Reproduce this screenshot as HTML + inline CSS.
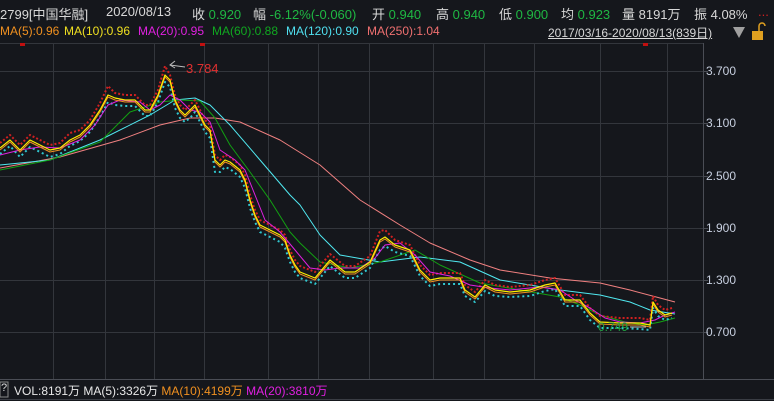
<!DOCTYPE html>
<html><head><meta charset="utf-8"><style>
body{margin:0;width:774px;height:401px;background:#15171c;overflow:hidden;position:relative;font-family:"Liberation Sans","Noto Sans CJK SC",sans-serif}
.t{position:absolute;white-space:nowrap}
.r1{top:4px;font-size:13px;color:#d8d8d8}
.r2{top:24px;font-size:12px}
.g{color:#1fb843}
.ax{position:absolute;left:706px;font-size:12px;color:#c8d0e0}
</style></head><body>
<svg width="774" height="401" style="position:absolute;left:0;top:0">
<g stroke="#33363c" stroke-width="1">
<line x1="0" y1="43.5" x2="703" y2="43.5"/>
<line x1="0" y1="71.5" x2="703" y2="71.5"/><line x1="0" y1="123.5" x2="703" y2="123.5"/><line x1="0" y1="176.5" x2="703" y2="176.5"/><line x1="0" y1="228.5" x2="703" y2="228.5"/><line x1="0" y1="280.5" x2="703" y2="280.5"/><line x1="0" y1="332.5" x2="703" y2="332.5"/>
<line x1="53.5" y1="43" x2="53.5" y2="379"/><line x1="105.5" y1="43" x2="105.5" y2="379"/><line x1="154.5" y1="43" x2="154.5" y2="379"/><line x1="204.5" y1="43" x2="204.5" y2="379"/><line x1="268.5" y1="43" x2="268.5" y2="379"/><line x1="318.5" y1="43" x2="318.5" y2="379"/><line x1="369.5" y1="43" x2="369.5" y2="379"/><line x1="433.5" y1="43" x2="433.5" y2="379"/><line x1="484.5" y1="43" x2="484.5" y2="379"/><line x1="534.5" y1="43" x2="534.5" y2="379"/><line x1="600.5" y1="43" x2="600.5" y2="379"/><line x1="667.5" y1="43" x2="667.5" y2="379"/>
</g>
<line x1="703.5" y1="43" x2="703.5" y2="379" stroke="#4a4d55"/>
<line x1="0" y1="379.5" x2="774" y2="379.5" stroke="#4a4d55"/>
<line x1="0" y1="399.5" x2="774" y2="399.5" stroke="#3a3d44"/>
<g stroke="#4a4d55"><line x1="703" y1="71.5" x2="708" y2="71.5"/><line x1="703" y1="123.5" x2="708" y2="123.5"/><line x1="703" y1="176.5" x2="708" y2="176.5"/><line x1="703" y1="228.5" x2="708" y2="228.5"/><line x1="703" y1="280.5" x2="708" y2="280.5"/><line x1="703" y1="332.5" x2="708" y2="332.5"/></g>
<g fill="none" stroke-linejoin="round">
<polyline stroke="#f08080" points="0,168 60,157 120,140 160,125 190,118 215,118 240,122 280,140 320,165 360,200 400,225 430,243 470,260 500,270 550,278 600,283 630,290 660,298 675,302"/>
<polyline stroke="#50e8f0" points="0,165 50,160 100,140 150,115 175,100 195,98 210,105 230,125 260,160 290,195 300,205 320,235 340,255 380,262 420,257 460,262 500,280 560,290 600,295 630,302 650,310 675,314"/>
<polyline stroke="#12a012" points="0,170 50,160 100,142 130,112 160,102 180,100 200,101 215,118 230,145 250,172 270,200 290,232 300,243 320,262 350,268 380,262 415,250 440,265 480,283 520,290 560,297 580,305 600,315 625,322 645,325 660,322 675,318"/>
<polyline stroke="#d02020" stroke-width="2" stroke-dasharray="2 2" points="0,143 10,135 20,145 30,135 40,140 50,145 60,143 70,133 80,130 90,120 100,103 108,86 115,93 125,95 135,95 145,105 150,105 158,90 165,66 170,75 175,95 180,105 185,110 190,105 195,100 200,110 205,120 210,125 215,155 220,160 225,155 230,157 240,165 245,175 250,195 255,210 260,220 270,225 280,230 285,235 290,250 295,260 300,266 315,272 330,254 345,266 355,266 370,256 380,231 385,230 395,240 410,245 420,265 430,275 440,273 460,273 465,285 475,292 485,280 495,285 510,287 530,285 545,280 555,278 565,295 580,295 590,308 600,316 620,318 640,318 650,320 653,296 658,305 665,310 672,308"/>
<polyline stroke="#30c8d0" stroke-width="2" stroke-dasharray="2 3" points="0,154 10,146 20,157 30,147 40,152 50,157 60,154 70,146 80,141 90,132 100,117 108,102 115,105 125,106 135,106 145,116 150,116 158,102 165,82 170,87 175,108 180,118 185,122 190,118 195,112 200,122 205,132 210,138 215,172 220,172 225,167 230,169 240,177 245,188 250,208 255,222 260,232 270,237 280,242 285,248 290,262 295,272 300,278 315,284 330,266 345,278 355,278 370,268 380,250 385,246 395,252 410,256 420,276 430,286 440,284 460,284 465,296 475,302 485,291 495,296 510,297 530,296 545,291 555,289 565,306 580,306 590,320 600,328 620,328 640,329 650,330 653,308 658,316 665,320 672,318"/>
<polyline stroke="#e020e0" points="0,155 20,150 40,147 60,148 80,140 95,125 108,105 120,100 140,102 150,110 160,105 170,95 180,100 190,110 200,112 210,122 220,150 235,160 245,170 255,195 265,220 280,232 295,250 310,268 325,270 340,268 360,268 375,258 385,245 400,243 415,255 430,272 450,276 470,285 490,288 510,290 540,287 560,290 575,300 590,308 605,318 620,322 640,323 655,320 665,315 675,312"/>
<polyline stroke="#f09020" stroke-width="1" points="0,150 10,142 20,152 30,142 40,147 50,152 60,150 70,142 80,137 90,127 100,112 108,97 115,100 125,102 135,102 145,112 150,112 158,97 165,77 170,82 175,102 180,112 185,117 190,112 195,107 200,117 205,127 210,132 215,162 220,167 225,162 230,164 240,172 245,182 250,202 255,217 260,227 270,232 280,237 285,242 290,257 295,267 300,274 315,280 330,262 345,274 355,274 370,264 380,242 385,239 395,247 410,252 420,272 430,282 440,280 460,280 465,292 475,299 485,287 495,292 510,294 530,292 545,287 555,285 565,302 580,302 590,315 600,324 620,325 640,325 650,327 653,304 658,312 665,317 672,315"/>
<polyline stroke="#ffee00" stroke-width="1.2" points="0,148 10,140 20,150 30,140 40,145 50,150 60,148 70,140 80,135 90,125 100,110 108,95 115,98 125,100 135,100 145,110 150,110 158,95 165,75 170,80 175,100 180,110 185,115 190,110 195,105 200,115 205,125 210,130 215,160 220,165 225,160 230,162 240,170 245,180 250,200 255,215 260,225 270,230 280,235 285,240 290,255 295,265 300,272 315,278 330,260 345,272 355,272 370,262 380,240 385,237 395,245 410,250 420,270 430,280 440,278 460,278 465,290 475,297 485,285 495,290 510,292 530,290 545,285 555,283 565,300 580,300 590,313 600,322 620,323 640,323 650,325 653,302 658,310 665,315 672,313"/>
</g>
<line x1="170" y1="65" x2="185" y2="67" stroke="#bbb"/>
<polyline points="175,61 170,65 175,68" fill="none" stroke="#bbb"/>
<line x1="630" y1="327" x2="646" y2="327" stroke="#bbb"/>
<rect x="0" y="382" width="8" height="15" fill="none" stroke="#888"/>
<path d="M733 27 L745 27 L739 38 Z" fill="#a0a0a0"/>
<rect x="752" y="31" width="11" height="9" fill="#e0a020"/>
<path d="M759 31 V26 a3 3 0 0 1 6 0" fill="none" stroke="#e0a020" stroke-width="1.5"/>
<rect x="20" y="43" width="5" height="3" fill="#c01010"/><rect x="200" y="43" width="5" height="3" fill="#c01010"/><rect x="643" y="43" width="5" height="3" fill="#c01010"/>
</svg>
<span class="t r1">2799[中国华融]</span>
<span class="t r1" style="left:106px">2020/08/13</span>
<span class="t r1" style="left:192px">收 <span class="g">0.920</span></span>
<span class="t r1" style="left:253px">幅 <span class="g">-6.12%(-0.060)</span></span>
<span class="t r1" style="left:372px">开 <span class="g">0.940</span></span>
<span class="t r1" style="left:436px">高 <span class="g">0.940</span></span>
<span class="t r1" style="left:499px">低 <span class="g">0.900</span></span>
<span class="t r1" style="left:561px">均 <span class="g">0.923</span></span>
<span class="t r1" style="left:622px">量 8191万</span>
<span class="t r1" style="left:694px">振 4.08%</span>
<span class="t r1" style="left:758px;color:#d02020">...</span>
<span class="t r2" style="left:0;color:#f09020">MA(5):0.96</span>
<span class="t r2" style="left:64px;color:#f0e020">MA(10):0.96</span>
<span class="t r2" style="left:138px;color:#e020e0">MA(20):0.95</span>
<span class="t r2" style="left:212px;color:#10a820">MA(60):0.88</span>
<span class="t r2" style="left:286px;color:#50e0f0">MA(120):0.90</span>
<span class="t r2" style="left:367px;color:#f07070">MA(250):1.04</span>
<span class="t r2" style="left:548px;color:#d8d8d8;text-decoration:underline">2017/03/16-2020/08/13(839日)</span>
<span class="t" style="left:186px;top:61px;font-size:13px;color:#e03030">3.784</span>
<span class="t" style="left:598px;top:320px;font-size:12px;color:#20a040">0.749</span>
<span class="ax" style="top:64px">3.700</span>
<span class="ax" style="top:116px">3.100</span>
<span class="ax" style="top:169px">2.500</span>
<span class="ax" style="top:221px">1.900</span>
<span class="ax" style="top:273px">1.300</span>
<span class="ax" style="top:325px">0.700</span>
<span class="t" style="left:1px;top:382px;font-size:11px;color:#ddd">?</span>
<span class="t" style="left:14px;top:382px;font-size:12px;color:#e8e8e8">VOL:8191万 MA(5):3326万 <span style="color:#f09020">MA(10):4199万</span> <span style="color:#e020e0">MA(20):3810万</span></span>
</body></html>
